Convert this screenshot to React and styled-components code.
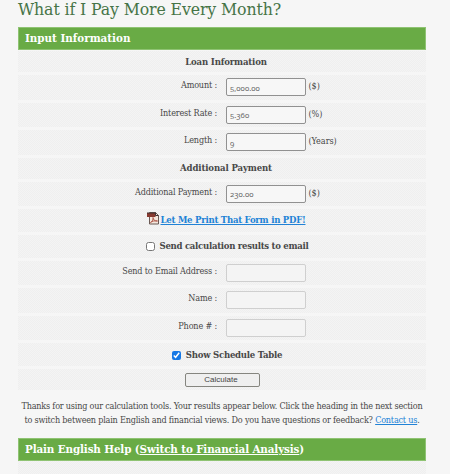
import React from "react";
import styled, { createGlobalStyle } from "styled-components";

const Global = createGlobalStyle`
  * { box-sizing: border-box; }
  html, body { margin: 0; background: #f6f6f6; }
  body { overflow: hidden; }
`;
const serif = `"DejaVu Serif Condensed", "DejaVu Serif", serif`;
const Page = styled.main`
  width: 450px; height: 474px; overflow: hidden; padding: 0 25px 0 18px;
  background: #f6f6f6; color: #484848; font: 9px/14px ${serif};
  font-stretch: condensed;
`;
const Title = styled.h1`
  margin: 0; height: 27px; font: 400 17.5px/18px ${serif}; font-stretch: condensed;
  color: #467447; white-space: nowrap; letter-spacing: ${p => p.$ls}px;
`;
const Bar = styled.h2`
  margin: 0; width: 408px; height: 23px; padding-left: 6px;
  background: #69ab45; border: 1px solid #8fc373; color: #fff;
  font: 700 11.5px/21px ${serif}; font-stretch: condensed; white-space: nowrap;
  letter-spacing: ${p => p.$ls}px;
`;
const Row = styled.div`
  display: flex; align-items: center; width: 408px; height: ${p => p.$h}px;
  margin-bottom: ${p => p.$gap ?? 3}px; justify-content: ${p => (p.$center ? "center" : "flex-start")};
  padding-left: ${p => p.$indent ?? 0}px;
  background: repeating-conic-gradient(#f4f4f4 0 25%, #efefef 0 50%) 0 0 / 2px 2px;
`;
const Form = styled.form`padding-top: 1px;`;
const Label = styled.label`
  width: 199px; text-align: right; white-space: nowrap; padding-bottom: 4px;
  letter-spacing: -0.17px;
`;
const Unit = styled.span`padding-bottom: 2px; letter-spacing: -0.05px;`;
const Input = styled.input`
  width: 80px; height: 18px; margin: 0 2.5px 0 9px; padding: 1px 3px 0;
  border: 1px solid ${p => (p.disabled ? "#cfcfcf" : "#919191")}; border-radius: 2px;
  background: ${p => (p.disabled ? "#f4f4f4" : "#f7f7f7")}; color: #6a6a6a;
  font: 7.8px/12px "Noto Sans", sans-serif; font-variant-numeric: oldstyle-nums;
`;
const Strong = styled.strong`
  font-size: 9.5px; white-space: nowrap; letter-spacing: ${p => p.$ls}px;
`;
const Link = styled.a`color: #2182d6; text-decoration: underline;`;
const Check = styled.input`width: 9px; height: 9px; margin: 1px 5px 0 0; accent-color: #1678e5;`;
const Button = styled.button`
  width: 75px; height: 14px; padding: 0 2px 0 0; border: 1px solid #85857f; border-radius: 2px;
  background: #efefef; color: #444; font: 8px/11px "Liberation Sans", sans-serif;
`;
const Icon = styled.svg`width: 12px; height: 13px; margin: 0 2px 4px 0;`;
const Note = styled.p`
  margin: 10px 0 0; width: 408px; height: 38px; text-align: center; line-height: 13.5px; white-space: nowrap;
`;
const Line = styled.span`display: block; letter-spacing: ${p => p.$ls}px;`;

const fields = [
  ["Amount :", "5,000.00", "($)"],
  ["Interest Rate :", "5.360", "(%)"],
  ["Length :", "9", "(Years)"],
];
const contacts = ["Send to Email Address :", "Name :", "Phone # :"];

function PdfIcon() {
  return (
    <Icon viewBox="0 0 12 13">
      <path d="M2.500 .5h6l3 3v8.500h-9z" fill="#f3e6dc" stroke="#6b5a55" />
      <path d="M0 1h8.500v4H0z" fill="#87392f" />
      <path d="M0 1h8.500M8.500 .5v3h3" fill="none" stroke="#3f3333" />
      <path d="M3.500 10.500c2-1 3-3.500 2.500-5 0 2 2 4 4.500 3.500C8 8.500 5 9 3.500 10.500z" fill="none" stroke="#b15b4d" />
    </Icon>
  );
}

export default function App() {
  return (
    <>
      <Global />
      <Page>
        <Title $ls={-0.11}>What if I Pay More Every Month?</Title>
        <Bar $ls={0}>Input Information</Bar>
        <Form>
          <Row $h={21} $center $indent={8}><Strong $ls={-0.17}>Loan Information</Strong></Row>
          {fields.map(([name, value, unit]) => (
            <Row key={name} $h={24.5}>
              <Label>{name}</Label><Input defaultValue={value} aria-label={name} /><Unit>{unit}</Unit>
            </Row>
          ))}
          <Row $h={21} $center $indent={8}><Strong $ls={-0.12}>Additional Payment</Strong></Row>
          <Row $h={24}>
            <Label>Additional Payment :</Label><Input defaultValue="230.00" /><Unit>($)</Unit>
          </Row>
          <Row $h={23} $center $indent={8}><PdfIcon /><Strong $ls={-0.25}><Link href="#">Let Me Print That Form in PDF!</Link></Strong></Row>
          <Row $h={23} $center $indent={10}><Check type="checkbox" /><Strong $ls={-0.28}>Send calculation results to email</Strong></Row>
          {contacts.map(name => (
            <Row key={name} $h={24.5}><Label>{name}</Label><Input disabled aria-label={name} /></Row>
          ))}
          <Row $h={23} $center $indent={10}><Check type="checkbox" defaultChecked /><Strong $ls={-0.24}>Show Schedule Table</Strong></Row>
          <Row $h={21} $gap={0} $center><Button type="button">Calculate</Button></Row>
        </Form>
        <Note>
          <Line $ls={-0.21}>Thanks for using our calculation tools. Your results appear below. Click the heading in the next section</Line>
          <Line $ls={-0.2}>to switch between plain English and financial views. Do you have questions or feedback? <Link href="#">Contact us</Link>.</Line>
        </Note>
        <Bar $ls={-0.12}>Plain English Help (<u>Switch to Financial Analysis</u>)</Bar>
        <Row $h={30} />
      </Page>
    </>
  );
}
